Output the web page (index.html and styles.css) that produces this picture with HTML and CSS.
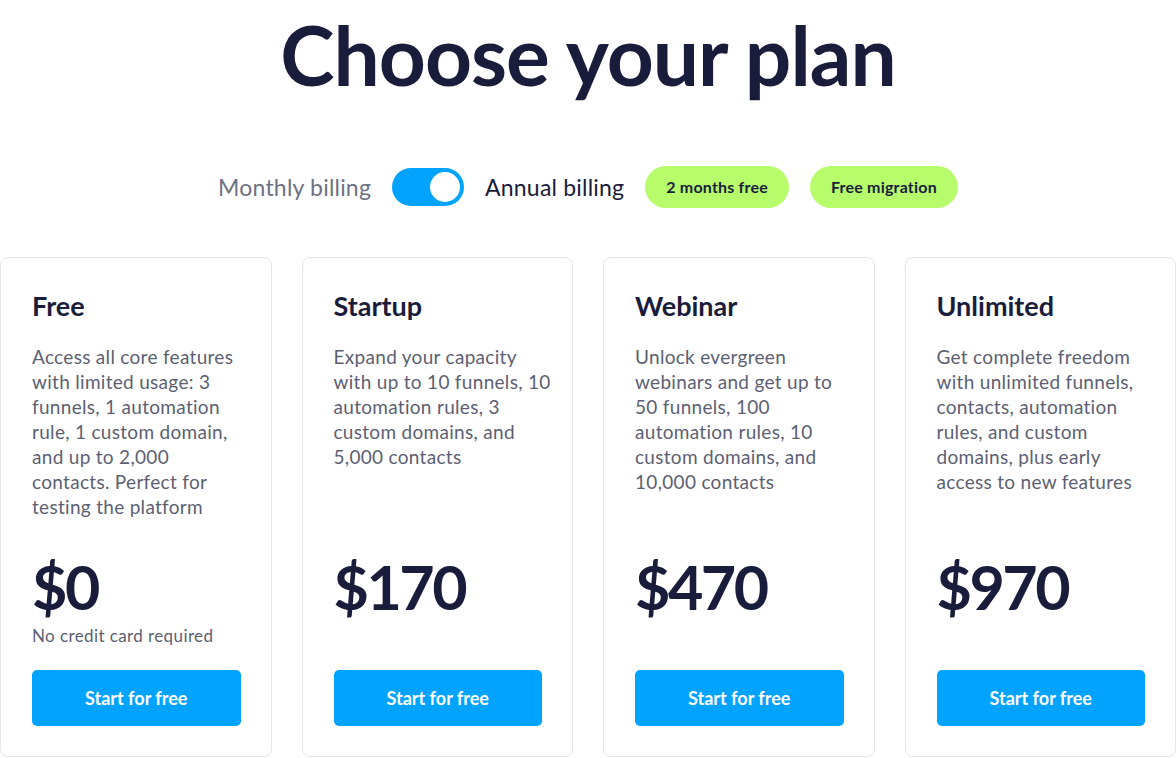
FILE: index.html
```html
<!DOCTYPE html>
<html>

<head>
	<meta charset="utf-8">
	<meta name="viewport" content="width=device-width">
	<title>Choose your plan</title>
	<link rel="stylesheet" href="styles.css">
</head>

<body>
	<h1 class="Heading">Choose your plan</h1>

	<div class="Billing">
		<span class="off">Monthly billing</span>
		<span class="Toggle"><span class="knob"></span></span>
		<span class="on">Annual billing</span>
		<span class="Badge">2 months free</span>
		<span class="Badge">Free migration</span>
	</div>

	<section class="Plans">
		<div class="Card">
			<h2>Free</h2>
			<p class="desc">Access all core features with limited usage: 3 funnels, 1 automation rule, 1 custom domain, and up to 2,000 contacts. Perfect for testing the platform</p>
			<div class="PriceBox">
				<div class="price">$0</div>
				<div class="note">No credit card required</div>
			</div>
			<button class="Start">Start for free</button>
		</div>
		<div class="Card Startup">
			<h2>Startup</h2>
			<p class="desc">Expand your capacity with up to 10 funnels, 10 automation rules, 3 custom domains, and 5,000 contacts</p>
			<div class="PriceBox">
				<div class="price">$170</div>
			</div>
			<button class="Start">Start for free</button>
		</div>
		<div class="Card">
			<h2>Webinar</h2>
			<p class="desc">Unlock evergreen webinars and get up to 50 funnels, 100 automation rules, 10 custom domains, and 10,000 contacts</p>
			<div class="PriceBox">
				<div class="price">$470</div>
			</div>
			<button class="Start">Start for free</button>
		</div>
		<div class="Card">
			<h2>Unlimited</h2>
			<p class="desc">Get complete freedom with unlimited funnels, contacts, automation rules, and custom domains, plus early access to new features</p>
			<div class="PriceBox">
				<div class="price">$970</div>
			</div>
			<button class="Start">Start for free</button>
		</div>
	</section>
</body>

</html>
```

FILE: styles.css
```css
html, body {
	margin: 0;
	padding: 0;
	background: #ffffff;
	font-family: "Lato", "Noto Sans", sans-serif;
	color: #1a1c3b;
}

.Heading {
	margin: 0;
	padding-top: 6px;
	text-align: center;
	font-size: 82px;
	font-weight: 700;
	line-height: 96px;
	letter-spacing: -1px;
}

.Billing {
	display: flex;
	justify-content: center;
	align-items: center;
	gap: 21px;
	margin-top: 64px;
	font-size: 23px;
	letter-spacing: 0.2px;
}

.Billing .off {
	color: #6e7184;
}

.Billing .on {
	color: #1a1c3b;
}

.Toggle {
	display: flex;
	justify-content: flex-end;
	align-items: center;
	width: 72px;
	height: 38px;
	padding: 0 4px;
	box-sizing: border-box;
	border-radius: 19px;
	background: #00a3ff;
}

.Toggle .knob {
	width: 30px;
	height: 30px;
	border-radius: 50%;
	background: #ffffff;
}

.Badge {
	padding: 0 21px;
	height: 42px;
	line-height: 42px;
	border-radius: 21px;
	background: #b6fc6b;
	font-size: 16px;
	font-weight: 700;
	letter-spacing: 0.2px;
}

.Plans {
	display: grid;
	grid-template-columns: repeat(4, 1fr);
	gap: 30px;
	margin-top: 49px;
}

.Card {
	display: flex;
	flex-direction: column;
	height: 500px;
	box-sizing: border-box;
	padding: 31px 30px 30px 31px;
	border: 1px solid #e4e5e9;
	border-radius: 8px;
}

.Card h2 {
	margin: 0;
	font-size: 27px;
	font-weight: 700;
	line-height: 34px;
}

.desc {
	flex: 1;
	margin: 21px -8px 0 0;
	font-size: 19px;
	line-height: 25px;
	letter-spacing: 0.3px;
	color: #5c5f73;
}

/* "10" has to stay on the second line here */
.Startup .desc {
	margin-right: -14px;
}

.PriceBox {
	height: 118px;
}

.price {
	font-size: 61px;
	font-weight: 700;
	line-height: 70px;
	letter-spacing: -2.5px;
}

.note {
	margin-top: 3px;
	font-size: 17px;
	line-height: 22px;
	letter-spacing: 0.4px;
	color: #5c5f73;
}

.Start {
	height: 56px;
	width: 100%;
	border: none;
	border-radius: 5px;
	background: #00a3ff;
	color: #ffffff;
	font-family: inherit;
	font-size: 18px;
	font-weight: 700;
}
```
